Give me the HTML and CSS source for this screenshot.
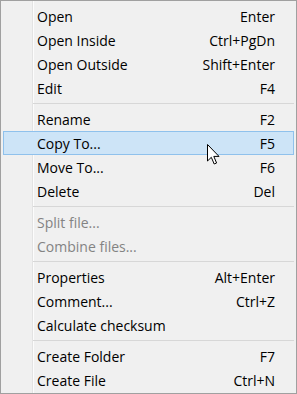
FILE: index.html
```html
<!DOCTYPE html>
<html lang="en">
<head>
    <meta charset="UTF-8">
    <title>Context menu</title>
    <link rel="stylesheet" href="styles.css">
</head>
<body>
    <div class="menu">
        <div class="item"><span>Open</span><span>Enter</span></div>
        <div class="item"><span>Open Inside</span><span>Ctrl+PgDn</span></div>
        <div class="item"><span>Open Outside</span><span>Shift+Enter</span></div>
        <div class="item"><span>Edit</span><span>F4</span></div>
        <div class="sep"></div>
        <div class="item"><span>Rename</span><span>F2</span></div>
        <div class="item hover"><span>Copy To...</span><span>F5</span></div>
        <div class="item"><span>Move To...</span><span>F6</span></div>
        <div class="item"><span>Delete</span><span>Del</span></div>
        <div class="sep"></div>
        <div class="item disabled"><span>Split file...</span><span></span></div>
        <div class="item disabled"><span>Combine files...</span><span></span></div>
        <div class="sep"></div>
        <div class="item"><span>Properties</span><span>Alt+Enter</span></div>
        <div class="item"><span>Comment...</span><span>Ctrl+Z</span></div>
        <div class="item"><span>Calculate checksum</span><span></span></div>
        <div class="sep"></div>
        <div class="item"><span>Create Folder</span><span>F7</span></div>
        <div class="item"><span>Create File</span><span>Ctrl+N</span></div>

        <svg class="cursor" width="13" height="21" viewBox="0 0 13 21">
            <path d="M0.5 0.5 L0.5 17 L4.3 13.3 L7.2 20 L9.6 19 L6.8 12.4 L12 12.4 Z" fill="#fff" stroke="#000" stroke-width="1"/>
        </svg>
    </div>
</body>
</html>
```

FILE: styles.css
```css
/* Windows style context menu */
body {
    margin: 0;
    background-color: #fff;
}
.menu {
    position: relative;
    width: 291px;
    height: 389px;
    padding: 3px 2px 0 2px;
    border: 1px solid #a0a0a0;
    background-color: #f0f0f0;
    background-image: linear-gradient(to right, transparent 31px, #e3e3e3 31px, #e3e3e3 32px, #fcfcfc 32px, #fcfcfc 33px, transparent 33px);
    font-family: "Open Sans", "Noto Sans", sans-serif;
    font-size: 14px;
    color: #000;
}
.item {
    display: flex;
    justify-content: space-between;
    align-items: center;
    height: 24px;
    padding: 0 19px 0 34px;
    box-sizing: border-box;
}
.item.hover {
    background-color: #cde4f7;
    border: 1px solid #8fc1ec;
    padding: 0 18px 0 33px;
}
.item.disabled {
    color: #838383;
}
.sep {
    height: 1px;
    margin: 3px 0 3px 30px;
    background-color: #d7d7d7;
}
.cursor {
    position: absolute;
    left: 206px;
    top: 143px;
}
```
